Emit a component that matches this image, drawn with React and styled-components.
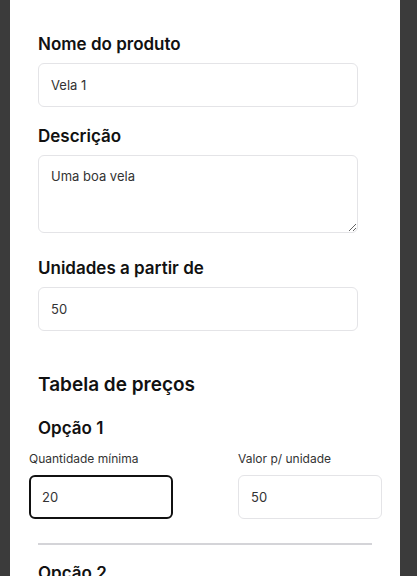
import React from 'react';
import styled, { createGlobalStyle } from 'styled-components';

const GlobalStyle = createGlobalStyle`
  body {
    margin: 0;
    background-color: #3b3b3b;
    font-family: Inter, "Noto Sans", sans-serif;
  }
`;

const Panel = styled.div`
  width: 390px;
  min-height: 100vh;
  margin-left: 10px;
  background-color: #ffffff;
  padding: 34px 28px 0;
  box-sizing: border-box;
  overflow: hidden;
`;

const Field = styled.div`
  display: flex;
  flex-direction: column;
  gap: 8px;
  width: 320px;
  margin-bottom: ${({ $after }) => $after ?? 19}px;
`;

const Heading = styled.label`
  font-size: 17px;
  font-weight: 600;
  color: #111111;
  line-height: 21px;
`;

const TextInput = styled.input`
  box-sizing: border-box;
  width: 100%;
  height: 44px;
  padding: 0 12px;
  border: 1px solid #e4e4e7;
  border-radius: 6px;
  font-family: inherit;
  font-size: 13px;
  color: #333333;
  outline: none;
`;

const TextArea = styled.textarea`
  display: block;
  box-sizing: border-box;
  width: 100%;
  height: 78px;
  padding: 12px;
  border: 1px solid #e4e4e7;
  border-radius: 6px;
  font-family: inherit;
  font-size: 13px;
  color: #333333;
  outline: none;
`;

const SectionTitle = styled.h2`
  margin: 42px 0 22px;
  font-size: 19px;
  font-weight: 600;
  line-height: 23px;
  color: #111111;
`;

const OptionTitle = styled.h3`
  margin: 0 0 12px;
  font-size: 17px;
  font-weight: 600;
  line-height: 21px;
  color: #111111;
`;

const OptionRow = styled.div`
  display: grid;
  grid-template-columns: 144px 144px;
  justify-content: space-between;
  width: 353px;
  margin-left: -9px;
`;

const SmallField = styled.div`
  display: flex;
  flex-direction: column;
  gap: 9px;
`;

const SmallLabel = styled.label`
  font-size: 12px;
  line-height: 15px;
  color: #333333;
`;

const PriceInput = styled(TextInput)`
  border: ${({ $active }) => ($active ? '2px solid #111111' : '1px solid #e4e4e7')};
  padding: 0 ${({ $active }) => ($active ? 11 : 12)}px;
`;

const Divider = styled.hr`
  width: 334px;
  margin: 24px 0 18px;
  border: none;
  height: 2px;
  background-color: #d4d4d8;
`;

const options = [
  { name: 'Opção 1', min: '20', price: '50' },
  { name: 'Opção 2', min: '', price: '' },
];

const App = () => {
  return (
    <>
      <GlobalStyle />
      <Panel>
        <Field>
          <Heading>Nome do produto</Heading>
          <TextInput defaultValue='Vela 1' />
        </Field>
        <Field $after={25}>
          <Heading>Descrição</Heading>
          <TextArea defaultValue='Uma boa vela' />
        </Field>
        <Field $after={0}>
          <Heading>Unidades a partir de</Heading>
          <TextInput defaultValue='50' />
        </Field>

        <SectionTitle>Tabela de preços</SectionTitle>

        {options.map((opt, i) => (
          <div key={opt.name}>
            <OptionTitle>{opt.name}</OptionTitle>
            <OptionRow>
              <SmallField>
                <SmallLabel>Quantidade mínima</SmallLabel>
                <PriceInput $active={i === 0} defaultValue={opt.min} />
              </SmallField>
              <SmallField>
                <SmallLabel>Valor p/ unidade</SmallLabel>
                <PriceInput defaultValue={opt.price} />
              </SmallField>
            </OptionRow>
            <Divider />
          </div>
        ))}
      </Panel>
    </>
  );
};

export default App;
